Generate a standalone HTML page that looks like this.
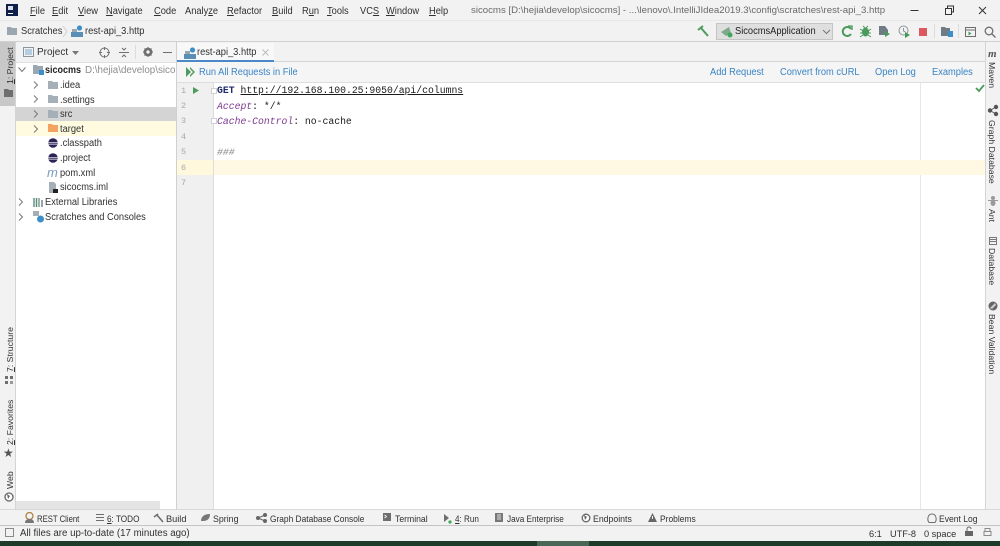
<!DOCTYPE html>
<html><head><meta charset="utf-8"><title>rest-api_3.http</title>
<style>
html,body{margin:0;padding:0;width:1000px;height:546px;overflow:hidden;background:#f2f2f2}
body{position:relative;font-family:"Liberation Sans",sans-serif;font-size:10px;color:#303030;filter:blur(.3px)}
.t{position:absolute;white-space:nowrap;line-height:12px;margin-top:1px}
.s{transform:scaleX(.93);transform-origin:0 0}
.b{font-size:9.2px;transform-origin:0 0}
.r{position:absolute}
.m{font-family:"Liberation Mono",monospace;font-size:9.77px;color:#1a1a1a}
.n{font-family:"Liberation Mono",monospace;font-size:8.5px;color:#a8a8a8;margin-top:0}
.l{color:#3a84c4}
.v{position:absolute;white-space:nowrap;line-height:12px;transform-origin:0 0;color:#333;font-size:8.7px}
.d{transform:rotate(90deg)}.u{transform:rotate(-90deg)}
svg{position:absolute;overflow:visible}
u{text-underline-offset:1px}
</style></head><body>

<!-- borders and panels -->
<div class="r" style="left:0;top:20px;width:1000px;height:1px;background:#e8e8e8"></div>
<div class="r" style="left:0;top:41px;width:1000px;height:1px;background:#d0d0d0"></div>
<div class="r" style="left:0;top:42px;width:15px;height:467px;background:#f2f2f2;border-right:1px solid #d4d4d4"></div>
<div class="r" style="left:0;top:42px;width:15px;height:64px;background:#c8c8c8"></div>
<div class="r" style="left:16px;top:42px;width:160px;height:467px;background:#fff"></div>
<div class="r" style="left:16px;top:42px;width:160px;height:20px;background:#f2f2f2;border-bottom:1px solid #e0e0e0"></div>
<div class="r" style="left:176px;top:42px;width:1px;height:467px;background:#d0d0d0"></div>
<div class="r" style="left:177px;top:42px;width:808px;height:19px;background:#f2f2f2;border-bottom:1px solid #d4d4d4"></div>
<div class="r" style="left:177px;top:62px;width:808px;height:20px;background:#f5f5f5;border-bottom:1px solid #dedede"></div>
<div class="r" style="left:177px;top:83px;width:808px;height:426px;background:#fff"></div>
<div class="r" style="left:177px;top:83px;width:36px;height:426px;background:#f0f0f0;border-right:1px solid #dcdcdc"></div>
<div class="r" style="left:920px;top:83px;width:1px;height:426px;background:#e8e8e8"></div>
<div class="r" style="left:177px;top:160px;width:36px;height:15px;background:#fff8dc"></div>
<div class="r" style="left:214px;top:160px;width:771px;height:15px;background:#fff9e3"></div>
<div class="r" style="left:985px;top:42px;width:15px;height:467px;background:#f2f2f2;border-left:1px solid #d4d4d4"></div>
<div class="r" style="left:16px;top:107px;width:160px;height:14px;background:#d4d4d4"></div>
<div class="r" style="left:16px;top:121px;width:160px;height:15px;background:#fffbe0"></div>
<div class="r" style="left:16px;top:501px;width:144px;height:8px;background:#e4e4e4"></div>
<div class="r" style="left:0;top:509px;width:1000px;height:1px;background:#d8d8d8"></div>
<div class="r" style="left:0;top:525px;width:1000px;height:1px;background:#c4c4c4"></div>
<div class="r" style="left:0;top:541px;width:1000px;height:5px;background:#1e3a28"></div>
<div class="r" style="left:537px;top:541px;width:52px;height:5px;background:#4a6656"></div>
<div class="r" style="left:177px;top:60px;width:97px;height:2px;background:#4a88c7"></div>

<!-- logo -->
<div class="r" style="left:6px;top:4px;width:12px;height:12px;background:#0e1f4a"></div>
<div class="r" style="left:8px;top:6px;width:5px;height:4px;background:#fff;opacity:.85"></div>
<div class="r" style="left:8px;top:13px;width:5px;height:1px;background:#fff"></div>

<!-- menu -->
<span class="t s" style="left:30px;top:5px"><u>F</u>ile</span>
<span class="t s" style="left:52px;top:5px"><u>E</u>dit</span>
<span class="t s" style="left:78px;top:5px"><u>V</u>iew</span>
<span class="t s" style="left:106px;top:5px"><u>N</u>avigate</span>
<span class="t s" style="left:154px;top:5px"><u>C</u>ode</span>
<span class="t s" style="left:185px;top:5px">Analy<u>z</u>e</span>
<span class="t s" style="left:227px;top:5px"><u>R</u>efactor</span>
<span class="t s" style="left:272px;top:5px"><u>B</u>uild</span>
<span class="t s" style="left:302px;top:5px">R<u>u</u>n</span>
<span class="t s" style="left:327px;top:5px"><u>T</u>ools</span>
<span class="t s" style="left:360px;top:5px">VC<u>S</u></span>
<span class="t s" style="left:386px;top:5px"><u>W</u>indow</span>
<span class="t s" style="left:429px;top:5px"><u>H</u>elp</span>
<span class="t" style="left:471px;top:4px;font-size:9.65px;color:#6a6a6a">sicocms [D:\hejia\develop\sicocms] - ...\lenovo\.IntelliJIdea2019.3\config\scratches\rest-api_3.http</span>

<!-- window buttons -->
<svg style="left:0;top:0" width="1000" height="20" fill="none" stroke="#333">
<path d="M910.5 10.5h8"/><path d="M945.5 8.5h6v6h-6zM947.5 8v-2h6v6h-2"/><path d="M979 7l7 7M986 7l-7 7"/>
</svg>

<!-- breadcrumb -->
<svg style="left:7px;top:27px" width="11" height="9"><path d="M0 0h4l1 1h5v7H0z" fill="#9aa7b0"/></svg>
<span class="t s" style="left:21px;top:25px">Scratches</span>
<svg style="left:63px;top:26px" width="5" height="11" fill="none" stroke="#d0d0d0"><path d="M0 0l4 5.5L0 11"/></svg>
<svg style="left:71px;top:25px" width="12" height="12"><circle cx="8.5" cy="3" r="2.6" fill="#3d8fc9"/><path d="M1 4h5v3H1z" fill="#9aa7b0"/><rect x="0" y="7" width="12" height="5" fill="#5a8fb5"/></svg>
<span class="t s" style="left:85px;top:25px">rest-api_3.http</span>

<!-- main toolbar right -->
<svg style="left:697px;top:25px" width="12" height="12" fill="none" stroke="#4f9a5d" stroke-width="2"><path d="M11 11L4 3"/><path d="M1 5l5-4"/></svg>
<div class="r" style="left:716px;top:23px;width:117px;height:17px;background:#dfdfdf;border:1px solid #c4c4c4;box-sizing:border-box"></div>
<svg style="left:721px;top:26px" width="12" height="12"><path d="M0 6l8-5 2 6-5 3z" fill="#7fa98a"/><circle cx="9" cy="9" r="2.5" fill="#3fa85a"/></svg>
<span class="t s" style="left:735px;top:25px;color:#222">SicocmsApplication</span>
<svg style="left:823px;top:30px" width="8" height="4" fill="none" stroke="#777"><path d="M0 0l3.5 3.5L7 0"/></svg>
<svg style="left:841px;top:25px" width="12" height="13" fill="none" stroke="#4a9a5c" stroke-width="2"><path d="M10 4a4.5 4.5 0 1 0 0 5"/><path d="M7 1h4v4" stroke-width="1.3"/></svg>
<svg style="left:860px;top:25px" width="11" height="13"><ellipse cx="5.5" cy="7" rx="3.5" ry="4.5" fill="#4a9a5c"/><path d="M0 4l3 2M11 4L8 6M0 8h3M8 8h3M0 12l3-2M11 12l-3-2M3 1l2 2M8 1L6 3" stroke="#4a9a5c"/></svg>
<svg style="left:879px;top:26px" width="12" height="12"><path d="M0 0h6l3 4v5H0z" fill="#6f7b85"/><path d="M6 5l5 3-5 3z" fill="#4a9a5c"/></svg>
<svg style="left:898px;top:25px" width="13" height="13" fill="none"><circle cx="5.5" cy="5.5" r="4.5" stroke="#8a959d"/><path d="M5.500 3v3l2 1" stroke="#8a959d"/><path d="M7 7l5 3-5 3z" fill="#3f9a55"/></svg>
<div class="r" style="left:919px;top:28px;width:8px;height:8px;background:#db5860"></div>
<div class="r" style="left:934px;top:24px;width:1px;height:14px;background:#dcdcdc"></div>
<svg style="left:941px;top:27px" width="12" height="10"><path d="M0 0h4l1 1h4v8H0z" fill="#6f7b85"/><rect x="7" y="4" width="5" height="6" fill="#3d8fc9"/></svg>
<div class="r" style="left:958px;top:24px;width:1px;height:14px;background:#dcdcdc"></div>
<svg style="left:965px;top:27px" width="11" height="10" fill="none" stroke="#6e6e6e"><path d="M.5.500h10v9H.5zM.5 3h10"/><path d="M3.500 4.500l3 2-3 2z" fill="#4a9a5c" stroke="none"/></svg>
<svg style="left:984px;top:26px" width="12" height="12" fill="none" stroke="#6e6e6e" stroke-width="1.300"><circle cx="5" cy="5" r="3.800"/><path d="M8 8l3.500 3.500"/></svg>

<!-- left vertical tabs -->
<span class="v u" style="left:3.500px;top:84px"><u>1</u>: Project</span>
<svg style="left:4px;top:89px" width="10" height="8"><path d="M0 0h4l1 1h4v7H0z" fill="#6e6e6e"/></svg>
<span class="v u" style="left:3.500px;top:372px"><u>7</u>: Structure</span>
<svg style="left:5px;top:376px" width="8" height="8" fill="#6e6e6e"><rect width="3" height="3"/><rect x="5" width="3" height="3"/><rect y="5" width="3" height="3"/><rect x="5" y="5" width="3" height="3" fill="#999"/></svg>
<span class="v u" style="left:3.500px;top:445px"><u>2</u>: Favorites</span>
<div class="r" style="left:3px;top:447px;font-size:12px;line-height:12px;color:#555;font-family:'DejaVu Sans',sans-serif">★</div>
<span class="v u" style="left:3.500px;top:489px">Web</span>
<svg style="left:4px;top:492px" width="10" height="10" fill="#fff" stroke="#666" stroke-width="1.300"><circle cx="5" cy="5" r="4"/><path d="M3 2l3 2-2 3z" fill="#666" stroke="none"/></svg>

<!-- right vertical tabs -->
<span class="r" style="left:988px;top:49px;font:italic bold 11px 'Liberation Serif',serif;color:#555;line-height:11px">m</span>
<span class="v d" style="left:998px;top:62px;">Maven</span>
<svg style="left:988px;top:105px" width="10" height="11" fill="#555" stroke="#555"><circle cx="2" cy="5.500" r="1.700"/><circle cx="8" cy="2" r="1.700"/><circle cx="8" cy="9" r="1.700"/><path d="M2 5.500L8 2M2 5.500L8 9"/></svg>
<span class="v d" style="left:998px;top:120px">Graph Database</span>
<svg style="left:988px;top:195px" width="10" height="11" fill="#999"><ellipse cx="5" cy="3" rx="2" ry="2"/><ellipse cx="5" cy="8" rx="2.500" ry="3"/><path d="M0 5h10v1H0z"/></svg>
<span class="v d" style="left:998px;top:209px">Ant</span>
<svg style="left:988px;top:236px" width="10" height="10" fill="none" stroke="#777"><path d="M1.500 1.500h7v7h-7zM1.500 3.500h7M1.500 5.500h7"/></svg>
<span class="v d" style="left:998px;top:248px">Database</span>
<svg style="left:988px;top:301px" width="10" height="10"><circle cx="5" cy="5" r="4.500" fill="#666"/><path d="M2 7l5-5 1 2-4 4z" fill="#ccc"/></svg>
<span class="v d" style="left:998px;top:314px">Bean Validation</span>

<!-- project toolbar -->
<svg style="left:23px;top:47px" width="10" height="10" fill="none"><rect x=".5" y=".5" width="10" height="9" stroke="#8a959d"/><rect x="2" y="2" width="7" height="6" fill="#b5cde0"/></svg>
<span class="t" style="left:37px;top:46px">Project</span>
<svg style="left:72px;top:51px" width="7" height="4"><path d="M0 0h7L3.500 4z" fill="#777"/></svg>
<svg style="left:99px;top:47px" width="11" height="11" fill="none" stroke="#6e6e6e"><circle cx="5.500" cy="5.500" r="4.500"/><path d="M5.500 0v3M5.500 8v3M0 5.500h3M8 5.500h3"/></svg>
<svg style="left:119px;top:47px" width="10" height="11" fill="none" stroke="#6e6e6e"><path d="M0 5.500h10M3 1l2 2 2-2M3 10l2-2 2 2"/></svg>
<div class="r" style="left:135px;top:45px;width:1px;height:14px;background:#dcdcdc"></div>
<svg style="left:143px;top:47px" width="10" height="10"><circle cx="5" cy="5" r="3.300" fill="none" stroke="#6e6e6e" stroke-width="2.200"/><path d="M5 0v10M0 5h10M1.500 1.500l7 7M8.500 1.500l-7 7" stroke="#6e6e6e" stroke-width="1"/><circle cx="5" cy="5" r="1.500" fill="#f2f2f2"/></svg>
<div class="r" style="left:163px;top:52px;width:9px;height:1px;background:#6e6e6e"></div>

<!-- editor tab -->
<div class="r" style="left:177px;top:43px;width:97px;height:17px;background:#f8f8f8"></div>
<svg style="left:184px;top:47px" width="12" height="12"><circle cx="8.500" cy="3" r="2.600" fill="#3d8fc9"/><path d="M1 4h5v3H1z" fill="#9aa7b0"/><rect x="0" y="7" width="12" height="5" fill="#5a8fb5"/></svg>
<span class="t s" style="left:197px;top:46px">rest-api_3.http</span>
<svg style="left:262px;top:49px" width="7" height="7" fill="none" stroke="#bbb"><path d="M.5.500l6 6M6.500.500l-6 6"/></svg>

<!-- request toolbar -->
<svg style="left:186px;top:67px" width="10" height="10" fill="#4f9a5d"><path d="M0 0l5 5-5 5z"/><path d="M4 0l5 5-5 5V8l3-3-3-3z"/></svg>
<span class="t l s" style="left:199px;top:66px">Run All Requests in File</span>
<span class="t l s" style="left:710px;top:66px">Add Request</span>
<span class="t l s" style="left:780px;top:66px">Convert from cURL</span>
<span class="t l s" style="left:875px;top:66px">Open Log</span>
<span class="t l s" style="left:932px;top:66px">Examples</span>
<svg style="left:975px;top:84px" width="10" height="8" fill="none" stroke="#4f9a5d" stroke-width="1.800"><path d="M1 4l3 3 5-6"/></svg>

<!-- tree -->
<svg style="left:18px;top:67px" width="8" height="6" fill="none" stroke="#777"><path d="M.5.500L4 4.500 7.500.500"/></svg>
<svg style="left:33px;top:65px" width="11" height="10"><path d="M0 0h4l1 1h5v8H0z" fill="#9aa7b0"/><rect x="6" y="5" width="5" height="5" fill="#3d8fc9"/></svg>
<span class="t" style="left:45px;top:64px;font-weight:bold;color:#222;transform:scaleX(.9);transform-origin:0 0">sicocms</span>
<span class="t" style="left:85px;top:64px;color:#8c8c8c;font-size:9.800px;width:91px;overflow:hidden">D:\hejia\develop\sico</span>

<svg style="left:33px;top:81px" width="6" height="8" fill="none" stroke="#777"><path d="M1 .500l3.500 3.500L1 7.500"/></svg>
<svg style="left:48px;top:81px" width="11" height="9"><path d="M0 0h4l1 1h5v7H0z" fill="#a4afb8"/></svg>
<span class="t s" style="left:60px;top:79px">.idea</span>
<svg style="left:33px;top:95px" width="6" height="8" fill="none" stroke="#777"><path d="M1 .500l3.500 3.500L1 7.500"/></svg>
<svg style="left:48px;top:95px" width="11" height="9"><path d="M0 0h4l1 1h5v7H0z" fill="#a4afb8"/></svg>
<span class="t s" style="left:60px;top:94px">.settings</span>
<svg style="left:33px;top:110px" width="6" height="8" fill="none" stroke="#777"><path d="M1 .500l3.500 3.500L1 7.500"/></svg>
<svg style="left:48px;top:110px" width="11" height="9"><path d="M0 0h4l1 1h5v7H0z" fill="#a4afb8"/></svg>
<span class="t s" style="left:60px;top:108px">src</span>
<svg style="left:33px;top:125px" width="6" height="8" fill="none" stroke="#777"><path d="M1 .500l3.500 3.500L1 7.500"/></svg>
<svg style="left:48px;top:124px" width="11" height="9"><path d="M0 0h4l1 1h5v7H0z" fill="#f4a460"/></svg>
<span class="t s" style="left:60px;top:123px">target</span>
<svg style="left:48px;top:138px" width="10" height="10"><circle cx="5" cy="5" r="4.800" fill="#2c2255"/><path d="M0 4.200h10v.7H0zM0 5.800h10v.7H0z" fill="#fff"/></svg>
<span class="t s" style="left:60px;top:137px">.classpath</span>
<svg style="left:48px;top:153px" width="10" height="10"><circle cx="5" cy="5" r="4.800" fill="#2c2255"/><path d="M0 4.200h10v.7H0zM0 5.800h10v.7H0z" fill="#fff"/></svg>
<span class="t s" style="left:60px;top:152px">.project</span>
<span class="r" style="left:47px;top:166px;font:italic 13px/13px 'Liberation Sans',sans-serif;color:#7a9cc0">m</span>
<span class="t s" style="left:60px;top:167px">pom.xml</span>
<svg style="left:49px;top:182px" width="10" height="11"><path d="M0 0h5l2 2v9H0z" fill="#a4afb8"/><rect x="4" y="7" width="5" height="4" fill="#222"/></svg>
<span class="t s" style="left:60px;top:181px">sicocms.iml</span>
<svg style="left:18px;top:198px" width="6" height="8" fill="none" stroke="#777"><path d="M1 .500l3.500 3.500L1 7.500"/></svg>
<svg style="left:33px;top:197px" width="10" height="10" fill="none" stroke-width="1.500"><path d="M1 1v9" stroke="#6e8a9c"/><path d="M3.500 1v9" stroke="#4f9a5d"/><path d="M6 1v9" stroke="#8a959d"/><path d="M9 3v7" stroke="#6e8a9c"/></svg>
<span class="t s" style="left:45px;top:196px">External Libraries</span>
<svg style="left:18px;top:213px" width="6" height="8" fill="none" stroke="#777"><path d="M1 .500l3.500 3.500L1 7.500"/></svg>
<svg style="left:33px;top:211px" width="11" height="12"><path d="M0 0h6v5H0z" fill="#a4afb8"/><circle cx="7.500" cy="8" r="3.500" fill="#3d8fc9"/></svg>
<span class="t s" style="left:45px;top:211px">Scratches and Consoles</span>

<!-- gutter -->
<span class="t n" style="left:181px;top:85px">1</span>
<span class="t n" style="left:181px;top:100px">2</span>
<span class="t n" style="left:181px;top:115px">3</span>
<span class="t n" style="left:181px;top:131px">4</span>
<span class="t n" style="left:181px;top:146px">5</span>
<span class="t n" style="left:181px;top:162px">6</span>
<span class="t n" style="left:181px;top:177px">7</span>
<svg style="left:193px;top:87px" width="6" height="7"><path d="M0 0l6 3.500L0 7z" fill="#4f9a5d"/></svg>
<svg style="left:211px;top:87px" width="6" height="40" fill="#fff" stroke="#d0d0d0"><path d="M.5 1.500h5v5h-5zM.5 31.500h5v5h-5z"/></svg>

<!-- code -->
<span class="t m" style="left:217px;top:84px"><b style="color:#1f2a6b">GET</b> <u>http://192.168.100.25:9050/api/columns</u></span>
<span class="t m" style="left:217px;top:100px"><i style="color:#7a3b8f">Accept</i>: */*</span>
<span class="t m" style="left:217px;top:115px"><i style="color:#7a3b8f">Cache-Control</i>: no-cache</span>
<span class="t m" style="left:217px;top:146px;font-style:italic;color:#8c8c8c">###</span>

<!-- bottom tool bar -->
<svg style="left:24px;top:512px" width="11" height="12"><circle cx="5.500" cy="4" r="3.500" fill="none" stroke="#b08040" stroke-width="1.300"/><path d="M1 11c0-3 2-4 4.500-4S10 8 10 11z" fill="#777"/></svg>
<span class="t b" style="left:37px;top:512px;transform:scaleX(.84)">REST Client</span>
<svg style="left:96px;top:513px" width="9" height="9" stroke="#6e6e6e"><path d="M0 1.500h8M0 4.500h8M0 7.500h8"/></svg>
<span class="t b" style="left:107px;top:512px;transform:scaleX(.89)"><u>6</u>: TODO</span>
<svg style="left:154px;top:513px" width="10" height="10" fill="none" stroke="#6e6e6e" stroke-width="1.600"><path d="M9 9L3 2"/><path d="M0 4l4-3"/></svg>
<span class="t b" style="left:166px;top:512px">Build</span>
<svg style="left:201px;top:513px" width="10" height="9"><path d="M0 8c0-5 4-7 9-7 0 4-2 7-7 7z" fill="#777"/></svg>
<span class="t b" style="left:213px;top:512px;transform:scaleX(.96)">Spring</span>
<svg style="left:256px;top:513px" width="11" height="10" fill="#666" stroke="#666"><circle cx="2" cy="5" r="1.500"/><circle cx="9" cy="2" r="1.500"/><circle cx="9" cy="8" r="1.500"/><path d="M2 5L9 2M2 5l7 3"/></svg>
<span class="t b" style="left:270px;top:512px;transform:scaleX(.91)">Graph Database Console</span>
<svg style="left:383px;top:513px" width="9" height="9"><rect width="8" height="8" fill="#6e6e6e"/><path d="M1.500 2l2 1.500-2 1.500" fill="none" stroke="#fff" stroke-width=".8"/></svg>
<span class="t b" style="left:395px;top:512px;transform:scaleX(.94)">Terminal</span>
<svg style="left:443px;top:514px" width="10" height="10"><path d="M1 0l5 4-5 4z" fill="#6e6e6e"/><circle cx="7" cy="8" r="1.600" fill="#3fa85a"/></svg>
<span class="t b" style="left:455px;top:512px;transform:scaleX(.88)"><u>4</u>: Run</span>
<svg style="left:495px;top:513px" width="9" height="10"><rect width="8" height="9" fill="#777"/><path d="M2 2h4M2 4h4M2 6h4" stroke="#ddd"/></svg>
<span class="t b" style="left:507px;top:512px;transform:scaleX(.89)">Java Enterprise</span>
<svg style="left:581px;top:513px" width="10" height="10"><circle cx="5" cy="5" r="3.800" fill="#fff" stroke="#666" stroke-width="1.300"/><path d="M3 2l3 2-2 3z" fill="#666"/></svg>
<span class="t b" style="left:593px;top:512px;transform:scaleX(.95)">Endpoints</span>
<svg style="left:648px;top:513px" width="9" height="9"><path d="M4.500 0L9 9H0z" fill="#666"/><path d="M4.500 3v3" stroke="#eee"/></svg>
<span class="t b" style="left:660px;top:512px;transform:scaleX(.92)">Problems</span>
<svg style="left:927px;top:513px" width="10" height="11" fill="none" stroke="#6e6e6e"><path d="M2 9.500C0 7 .5 1 5 1s5 6 3 8.500z"/></svg>
<span class="t b" style="left:939px;top:512px;transform:scaleX(.93)">Event Log</span>

<!-- status bar -->
<svg style="left:5px;top:528px" width="9" height="10" fill="none" stroke="#8a8a8a"><rect x=".5" y=".5" width="8" height="8"/></svg>
<span class="t" style="left:20px;top:527px;font-size:9.700px">All files are up-to-date (17 minutes ago)</span>
<span class="t" style="left:869px;top:527px;font-size:9.200px">6:1</span>
<span class="t" style="left:890px;top:527px;font-size:9.200px">UTF-8</span>
<span class="t" style="left:924px;top:527px;font-size:9.200px">0 space</span>
<svg style="left:965px;top:527px" width="9" height="10"><rect y="4" width="8" height="5" fill="#666"/><path d="M2 4V2a2 2 0 0 1 4 0" fill="none" stroke="#666"/></svg>
<svg style="left:983px;top:527px" width="10" height="10" fill="none" stroke="#8a8a8a"><path d="M2 1.500h5v3h-5zM1 4.500h7v4H1z"/></svg>
</body></html>
